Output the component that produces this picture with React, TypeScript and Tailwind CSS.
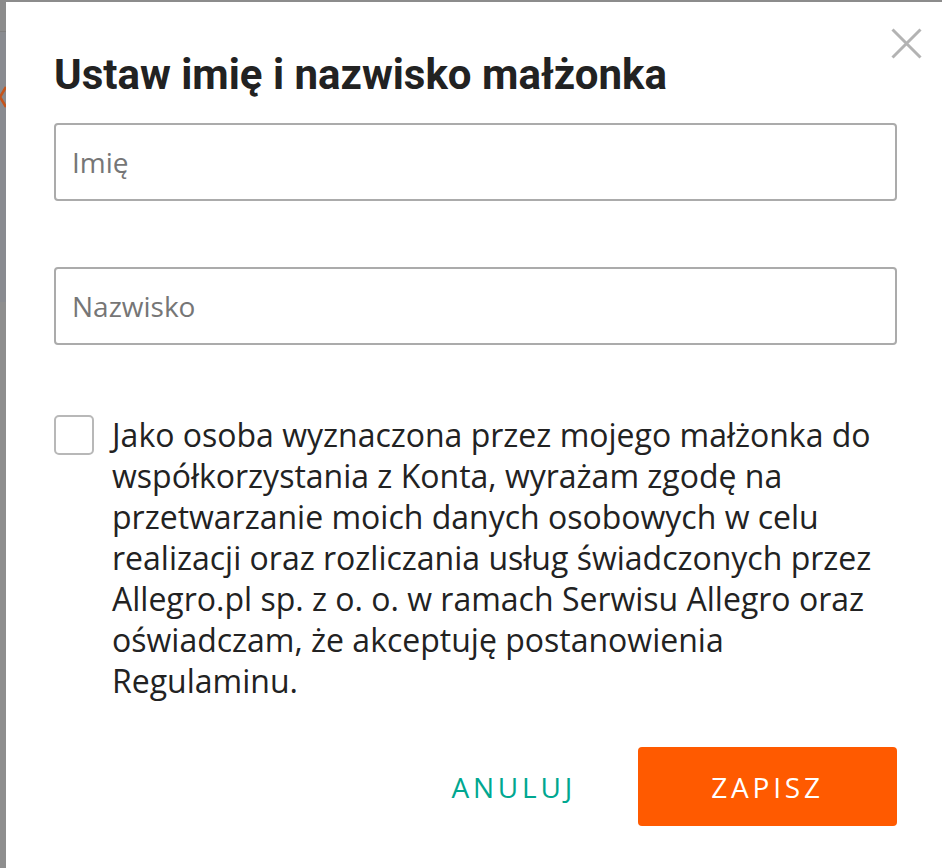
import React from "react";

export default function App() {
  return (
    <div className="flex h-[868px] w-[942px] overflow-hidden bg-[#8c8c8c]" style={{ fontFamily: '"Open Sans", sans-serif' }}>
      {/* background sliver */}
      <div className="flex w-[6px] shrink-0 flex-col">
        <div className="h-[31px] bg-[#8c8c8c]" />
        <div className="h-px bg-[#7f7f7f]" />
        <div className="relative h-[270px] bg-[#898b90]">
          <svg className="absolute left-0 top-[54px]" width="6" height="22" viewBox="0 0 6 22">
            <path d="M6 1 L0 11 L6 21" fill="none" stroke="#c4541c" strokeWidth="2.5" />
          </svg>
        </div>
        <div className="flex-1 bg-[#8e8e8e]" />
      </div>

      {/* dialog */}
      <div className="relative mt-[2px] flex flex-1 flex-col bg-white pl-12 pr-[45px] pt-12">
        <button className="absolute right-[20px] top-[25px] flex h-[32px] w-[32px] items-center justify-center" aria-label="Zamknij">
          <svg width="31" height="31" viewBox="0 0 31 31">
            <path d="M1.5 1.5 L29.5 29.5 M29.5 1.5 L1.5 29.5" stroke="#b3b3b3" strokeWidth="3" fill="none" />
          </svg>
        </button>

        <h1
          className="text-[42px] font-bold leading-[50px] text-[#222222]"
          style={{ fontFamily: 'Roboto, "Open Sans", sans-serif' }}
        >
          Ustaw imię i nazwisko małżonka
        </h1>

        <div className="mt-[23px] flex h-[78px] items-center rounded-[4px] border-2 border-[#ababab] px-4">
          <span className="text-[28px] text-[#767676]">Imię</span>
        </div>

        <div className="mt-[66px] flex h-[78px] items-center rounded-[4px] border-2 border-[#ababab] px-4">
          <span className="text-[28px] text-[#767676]">Nazwisko</span>
        </div>

        <div className="mt-[69px] flex gap-[18px]">
          <div className="mt-px h-[40px] w-[40px] shrink-0 rounded-[5px] border-2 border-[#b8b8b8]" />
          <p className="text-[32px] leading-[41px] text-[#222222]">
            Jako osoba wyznaczona przez mojego małżonka do współkorzystania z Konta, wyrażam zgodę na przetwarzanie moich danych osobowych w celu realizacji oraz rozliczania usług świadczonych przez Allegro.pl sp. z o. o. w ramach Serwisu Allegro oraz oświadczam, że akceptuję postanowienia Regulaminu.
          </p>
        </div>

        <div className="mt-[46px] flex items-center justify-end">
          <button className="mr-[62px] text-[28px] tracking-[3.8px] text-[#00a790]">ANULUJ</button>
          <button className="flex h-[79px] w-[259px] items-center justify-center rounded-[4px] bg-[#ff5a00] text-[28px] tracking-[3.8px] text-white">
            ZAPISZ
          </button>
        </div>
      </div>
    </div>
  );
}
